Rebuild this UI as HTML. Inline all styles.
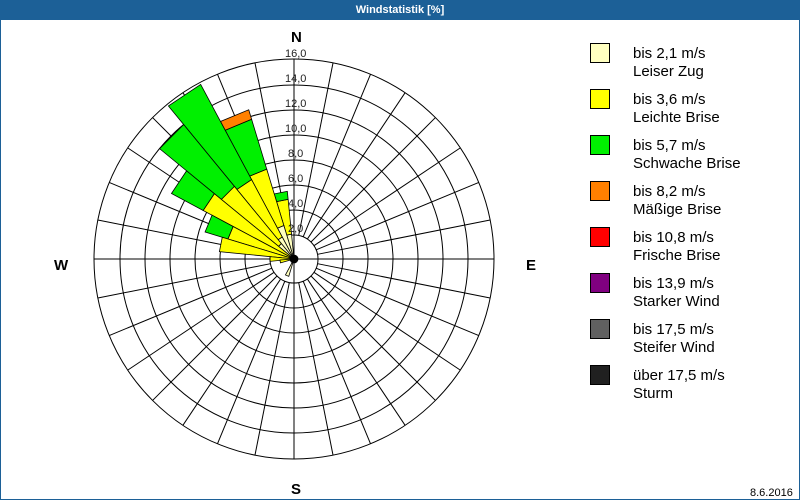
<!DOCTYPE html>
<html><head><meta charset="utf-8"><style>
html,body{margin:0;padding:0;background:#fff}
#w{position:relative;width:798px;height:479px;border:1px solid #1c6097;border-top:none;padding-top:20px;}
#t{position:absolute;left:0;top:0;width:800px;height:20px;background:#1c6097;color:#fff;font:bold 11px "Liberation Sans",sans-serif;text-align:center;line-height:20px;margin-left:-1px}
svg{position:absolute;left:0;top:0}
.lg{position:absolute;left:589px;width:20px;height:20px;border:1px solid #000;box-sizing:border-box}
.lt{position:absolute;left:632px;font:15px/18px "Liberation Sans",sans-serif;color:#000}
</style></head><body><div id="w">
<div id="t">Windstatistik [%]</div>
<svg width="800" height="500" viewBox="0 0 800 500">
<g transform="translate(293 259)" fill="none" stroke="#000" stroke-width="1">
<circle r="49"/><circle r="74"/><circle r="99"/><circle r="124"/><circle r="149"/><circle r="174"/><circle r="200"/>
<g id="sp">
<line x1="0" y1="-24" x2="0" y2="-200"/>
<line x1="0" y1="-24" x2="0" y2="-200" transform="rotate(11.25)"/>
<line x1="0" y1="-24" x2="0" y2="-200" transform="rotate(22.5)"/>
<line x1="0" y1="-24" x2="0" y2="-200" transform="rotate(33.75)"/>
<line x1="0" y1="-24" x2="0" y2="-200" transform="rotate(45)"/>
<line x1="0" y1="-24" x2="0" y2="-200" transform="rotate(56.25)"/>
<line x1="0" y1="-24" x2="0" y2="-200" transform="rotate(67.5)"/>
<line x1="0" y1="-24" x2="0" y2="-200" transform="rotate(78.75)"/>
</g>
<use href="#sp" transform="rotate(90)"/><use href="#sp" transform="rotate(180)"/><use href="#sp" transform="rotate(270)"/>
<circle r="24" fill="#fff"/>
<line x1="-200" y1="0" x2="200" y2="0"/><line x1="0" y1="-200" x2="0" y2="200"/>
</g>
<g transform="translate(293 259)" stroke="#000" stroke-width="0.8">
<g transform="rotate(-11.25)">
<polygon fill="#ffffc0" points="0,0 2.45,-24.9 -2.45,-24.9"/>
<polygon fill="#ffff00" points="-2.45,-24.9 2.45,-24.9 5.88,-59.7 -5.88,-59.7"/>
<polygon fill="#00f000" points="-5.88,-59.7 5.88,-59.7 6.66,-67.7 -6.66,-67.7"/>
</g>
<g transform="rotate(-22.5)">
<polygon fill="#ffffc0" points="0,0 3.43,-34.8 -3.43,-34.8"/>
<polygon fill="#ffff00" points="-3.43,-34.8 3.43,-34.8 9.21,-93.5 -9.21,-93.5"/>
<polygon fill="#00f000" points="-9.21,-93.5 9.21,-93.5 14.3,-145.3 -14.3,-145.3"/>
<polygon fill="#ff8000" points="-14.3,-145.3 14.3,-145.3 15.3,-155.2 -15.3,-155.2"/>
</g>
<g transform="rotate(-33.75)">
<polygon fill="#ffffc0" points="0,0 2.45,-24.9 -2.45,-24.9"/>
<polygon fill="#ffff00" points="-2.45,-24.9 2.45,-24.9 8.82,-89.6 -8.82,-89.6"/>
<polygon fill="#00f000" points="-8.82,-89.6 8.82,-89.6 19.4,-197 -19.4,-197"/>
</g>
<g transform="rotate(-45)">
<polygon fill="#ffffc0" points="0,0 1.96,-19.9 -1.96,-19.9"/>
<polygon fill="#ffff00" points="-1.96,-19.9 1.96,-19.9 9.21,-93.5 -9.21,-93.5"/>
<polygon fill="#00f000" points="-9.21,-93.5 9.21,-93.5 17.05,-173.1 -17.05,-173.1"/>
</g>
<g transform="rotate(-56.25)">
<polygon fill="#ffff00" points="0,0 10.1,-102.5 -10.1,-102.5"/>
<polygon fill="#00f000" points="-10.1,-102.5 10.1,-102.5 13.6,-138.3 -13.6,-138.3"/>
</g>
<g transform="rotate(-67.5)">
<polygon fill="#ffff00" points="0,0 6.76,-68.7 -6.76,-68.7"/>
<polygon fill="#00f000" points="-6.76,-68.7 6.76,-68.7 9.11,-92.5 -9.11,-92.5"/>
</g>
<g transform="rotate(-78.75)"><polygon fill="#ffff00" points="0,0 7.35,-74.6 -7.35,-74.6"/></g>
<g transform="rotate(-90)"><polygon fill="#ffff00" points="0,0 2.35,-23.9 -2.35,-23.9"/></g>
<g transform="rotate(-100)"><polygon fill="#ffff00" points="0,0 1.5,-14 -1.5,-14"/></g>
<g transform="rotate(202.5)"><polygon fill="#ffffc0" points="0,0 1.8,-18 -1.8,-18"/></g>
<circle r="4" fill="#000"/>
</g>
<g font-family="Liberation Sans,sans-serif" font-size="11" fill="#222">
<text x="284" y="57">16,0</text><text x="284" y="82">14,0</text><text x="284" y="107">12,0</text><text x="284" y="132">10,0</text>
<text x="287" y="157">8,0</text><text x="287" y="182">6,0</text><text x="287" y="207">4,0</text><text x="287" y="232">2,0</text>
</g>
<g font-family="Liberation Sans,sans-serif" font-size="15" font-weight="bold" fill="#000">
<text x="290" y="42">N</text><text x="53" y="270">W</text><text x="525" y="270">E</text><text x="290" y="494">S</text>
</g>
<text x="749" y="496" font-family="Liberation Sans,sans-serif" font-size="11" fill="#000">8.6.2016</text>
</svg>
<div class="lg" style="top:43px;background:#ffffc0"></div><div class="lt" style="top:45px">bis 2,1 m/s<br>Leiser Zug</div>
<div class="lg" style="top:89px;background:#ffff00"></div><div class="lt" style="top:91px">bis 3,6 m/s<br>Leichte Brise</div>
<div class="lg" style="top:135px;background:#00f000"></div><div class="lt" style="top:137px">bis 5,7 m/s<br>Schwache Brise</div>
<div class="lg" style="top:181px;background:#ff8000"></div><div class="lt" style="top:183px">bis 8,2 m/s<br>Mäßige Brise</div>
<div class="lg" style="top:227px;background:#ff0000"></div><div class="lt" style="top:229px">bis 10,8 m/s<br>Frische Brise</div>
<div class="lg" style="top:273px;background:#800080"></div><div class="lt" style="top:275px">bis 13,9 m/s<br>Starker Wind</div>
<div class="lg" style="top:319px;background:#606060"></div><div class="lt" style="top:321px">bis 17,5 m/s<br>Steifer Wind</div>
<div class="lg" style="top:365px;background:#202020"></div><div class="lt" style="top:367px">über 17,5 m/s<br>Sturm</div>
</div></body></html>
